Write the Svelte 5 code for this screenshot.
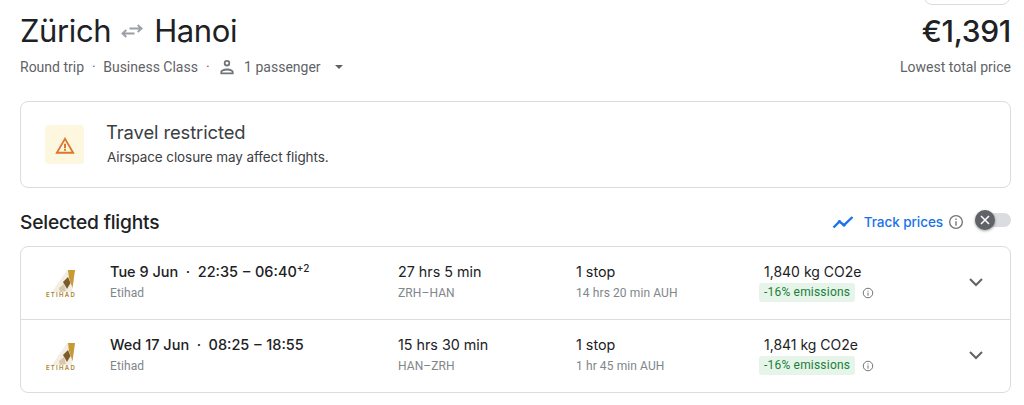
<script>
  const flights = [
    { date: 'Tue 9 Jun', time: '22:35 – 06:40', plus: '+2', dur: '27 hrs 5 min', route: 'ZRH–HAN', layover: '14 hrs 20 min AUH', co2: '1,840 kg CO2e' },
    { date: 'Wed 17 Jun', time: '08:25 – 18:55', plus: '', dur: '15 hrs 30 min', route: 'HAN–ZRH', layover: '1 hr 45 min AUH', co2: '1,841 kg CO2e' }
  ];
</script>

<main class="page">
  <div class="stub"></div>
  <header class="head">
    <div class="left">
      <h1 class="route">
        <span>Zürich</span>
        <svg class="swap" viewBox="0 0 24 24" width="24" height="24"><path d="M2.500 14.500h12M6.300 11l-3.800 3.500 3.800 3.500M21.500 9.500h-12M17.700 6l3.800 3.500-3.800 3.500" fill="none" stroke="#9aa0a6" stroke-width="1.900"/></svg>
        <span>Hanoi</span>
      </h1>
      <div class="meta">
        <span>Round trip</span><span class="dot">·</span><span>Business Class</span><span class="dot">·</span>
        <svg class="person" viewBox="0 0 24 24" width="24" height="24"><path d="M12 5a3.200 3.200 0 1 1 0 6.400A3.200 3.200 0 0 1 12 5zm0 8.600c3 0 6.600 1.400 6.600 3.400v2.200H5.400V17c0-2 3.600-3.400 6.600-3.400zm0-6.800a1.400 1.400 0 1 0 0 2.800 1.400 1.400 0 0 0 0-2.800zm0 8.600c-2.400 0-4.800 1-4.800 1.600v.4h9.600v-.4c0-.6-2.400-1.600-4.800-1.600z" fill="#70757a" fill-rule="evenodd"/></svg>
        <span class="pax">1 passenger</span>
        <span class="caret"></span>
      </div>
    </div>
    <div class="right">
      <div class="price">€1,391</div>
      <div class="lowest">Lowest total price</div>
    </div>
  </header>

  <section class="alert">
    <div class="warn">
      <svg viewBox="0 0 24 24" width="26" height="26"><path d="M12 4.500 3 20h18L12 4.500zm0 3.400L18 18.200H6L12 7.900z" fill="#d9772b" fill-rule="evenodd"/><path d="M11.100 10.800h1.800v4.200h-1.800zM11.100 15.800h1.800v1.600h-1.800z" fill="#d9772b"/></svg>
    </div>
    <div>
      <div class="a-title">Travel restricted</div>
      <div class="a-text">Airspace closure may affect flights.</div>
    </div>
  </section>

  <div class="sel">
    <h2>Selected flights</h2>
    <div class="track">
      <svg viewBox="0 0 24 24" width="24" height="24"><path d="M2.500 17.500l6-6 4.500 3.600L21.500 7" fill="none" stroke="#1a73e8" stroke-width="2.400"/><circle cx="8.500" cy="11.500" r="1.600" fill="#1a73e8"/><circle cx="13" cy="15" r="1.600" fill="#1a73e8"/></svg>
      <span class="track-label">Track prices</span>
      <svg class="info-big" viewBox="0 0 24 24" width="16" height="16"><circle cx="12" cy="12" r="9.500" fill="none" stroke="#70757a" stroke-width="2"/><path d="M11 11h2v6.500h-2zM11 6.800h2v2.200h-2z" fill="#70757a"/></svg>
      <div class="toggle">
        <div class="knob">
          <svg viewBox="0 0 12 12" width="12" height="12"><path d="M2 2l8 8M10 2l-8 8" stroke="#fff" stroke-width="1.500"/></svg>
        </div>
      </div>
    </div>
  </div>

  <section class="card">
    {#each flights as f}
      <div class="row">
        <div class="logo">
          <svg viewBox="0 0 36 30" width="36" height="30">
            <path d="M9 24 L24 2 L32 2 L29 24 Z" fill="#f3eee3"/>
            <path d="M25 2 L32 2 L29.500 20 L26 10 Z" fill="#c79a35"/>
            <path d="M20 14 L25 9 L27.500 15 L24 21 Z" fill="#7b5b2c"/>
            <path d="M16 20 L21 16 L23 23 L17 24 Z" fill="#d8c8a8"/>
            <text x="18" y="29" text-anchor="middle" class="logo-text">ETIHAD</text>
          </svg>
        </div>
        <div class="c1">
          <div class="main">{f.date}<span class="mdot">·</span><span class="time">{f.time}</span>{#if f.plus}<sup>{f.plus}</sup>{/if}</div>
          <div class="sub">Etihad</div>
        </div>
        <div class="c2">
          <div class="main reg">{f.dur}</div>
          <div class="sub">{f.route}</div>
        </div>
        <div class="c3">
          <div class="main reg">1 stop</div>
          <div class="sub">{f.layover}</div>
        </div>
        <div class="c4">
          <div class="main reg co2">{f.co2}</div>
          <div class="em">
            <span class="chip">-16% emissions</span>
            <svg viewBox="0 0 24 24" width="12" height="12"><circle cx="12" cy="12" r="9.500" fill="none" stroke="#70757a" stroke-width="2"/><path d="M11 11h2v6.500h-2zM11 6.800h2v2.200h-2z" fill="#70757a"/></svg>
          </div>
        </div>
        <svg class="chev" viewBox="0 0 24 24" width="24" height="24"><path d="M6 9l6 6 6-6" fill="none" stroke="#5f6368" stroke-width="2"/></svg>
      </div>
    {/each}
  </section>
</main>

<style>
  :global(body) { margin: 0; background: #fff; }
  .page { width: 1024px; height: 405px; overflow: hidden; position: relative; box-sizing: border-box; padding: 0 13px 0 20px; font-family: Roboto, sans-serif; color: #202124; }
  .stub { position: absolute; left: 924px; top: -20px; width: 84px; height: 23px; border: 1px solid #dadce0; border-radius: 8px; }
  .head { display: flex; justify-content: space-between; padding-top: 12px; height: 101px; box-sizing: border-box; }
  .route { margin: 0; display: flex; align-items: center; font: 400 31px/38px Inter, sans-serif; letter-spacing: -0.4px; height: 38px; }
  .swap { margin: 0 10px 0 9px; }
  .meta { display: flex; align-items: center; margin-top: 8px; height: 18px; font-size: 14px; line-height: 18px; color: #5f6368; }
  .dot { margin: 0 7.500px 0 8px; }
  .person { margin: 0 5px 0 -2px; flex: none; }
  .pax { letter-spacing: 0; }
  .caret { margin-left: 14px; width: 0; height: 0; border: 4px solid transparent; border-top: 4px solid #5f6368; border-bottom: 0; }
  .right { text-align: right; }
  .price { font: 500 30px/38px Inter, sans-serif; letter-spacing: -0.3px; }
  .lowest { margin-top: 8px; font-size: 14px; line-height: 18px; color: #5f6368; }
  .alert { height: 87px; width: 991px; box-sizing: border-box; border: 1px solid #dadce0; border-radius: 8px; display: flex; align-items: center; padding-left: 24px; gap: 23px; }
  .warn { width: 39px; height: 39px; background: #fef7e0; border-radius: 4px; display: flex; align-items: center; justify-content: center; }
  .a-title { font: 400 18.400px/24px Inter, sans-serif; color: #3c4043; letter-spacing: -0.1px; margin-top: -4px; margin-left: -1px; }
  .a-text { margin-top: 4px; font: 400 13.500px/18px Inter, sans-serif; color: #3c4043; letter-spacing: -0.1px; }
  .sel { height: 58px; width: 991px; display: flex; justify-content: space-between; align-items: center; box-sizing: border-box; padding-top: 10px; }
  h2 { margin: 0; font: 500 19.200px/24px Inter, sans-serif; letter-spacing: -0.2px; }
  .track { display: flex; align-items: center; }
  .track-label { margin-left: 9px; font: 500 13.600px/18px Inter, sans-serif; color: #1a73e8; letter-spacing: -0.1px; }
  .info-big { margin-left: 5px; }
  .toggle { position: relative; margin-left: 11px; width: 36px; height: 14px; border-radius: 7px; background: #dadce0; margin-top: -4px; }
  .knob { position: absolute; left: 0; top: -3px; width: 20px; height: 20px; border-radius: 50%; background: #5f6368; display: flex; align-items: center; justify-content: center; box-shadow: 0 1px 3px rgba(0,0,0,.4); }
  .card { width: 991px; box-sizing: border-box; border: 1px solid #dadce0; border-radius: 8px; }
  .row { height: 72px; display: grid; grid-template-columns: 89px 288px 178px 188px 1fr 46px; align-items: center; padding-bottom: 3px; box-sizing: border-box; }
  .row + .row { height: 73px; border-top: 1px solid #dadce0; }
  .logo { padding-left: 22px; display: flex; margin-top: 3px; }
  .logo-text { font: 600 6px Inter, sans-serif; fill: #a8842a; letter-spacing: 1.300px; }
  .main { font: 500 14.500px/20px Inter, sans-serif; color: #202124; white-space: nowrap; }
  .reg { font-weight: 400; font-size: 14.300px; }
  .mdot { margin: 0 7.500px; }
  .time { word-spacing: 1px; }
  sup { font-size: 10px; line-height: 0; vertical-align: 5px; }
  .sub { margin-top: 3px; font-size: 12px; line-height: 16px; color: #80868b; letter-spacing: .1px; white-space: nowrap; }
  .co2 { line-height: 18px; margin-top: 2px; font-size: 14px; }
  .em { display: flex; align-items: center; gap: 7px; margin-left: -5px; margin-top: 2px; }
  .chip { background: #e6f4ea; color: #188038; border-radius: 3px; font-size: 12px; line-height: 19px; padding: 0 5px; letter-spacing: .2px; }
  .chev { justify-self: start; margin-top: 1px; }
</style>
